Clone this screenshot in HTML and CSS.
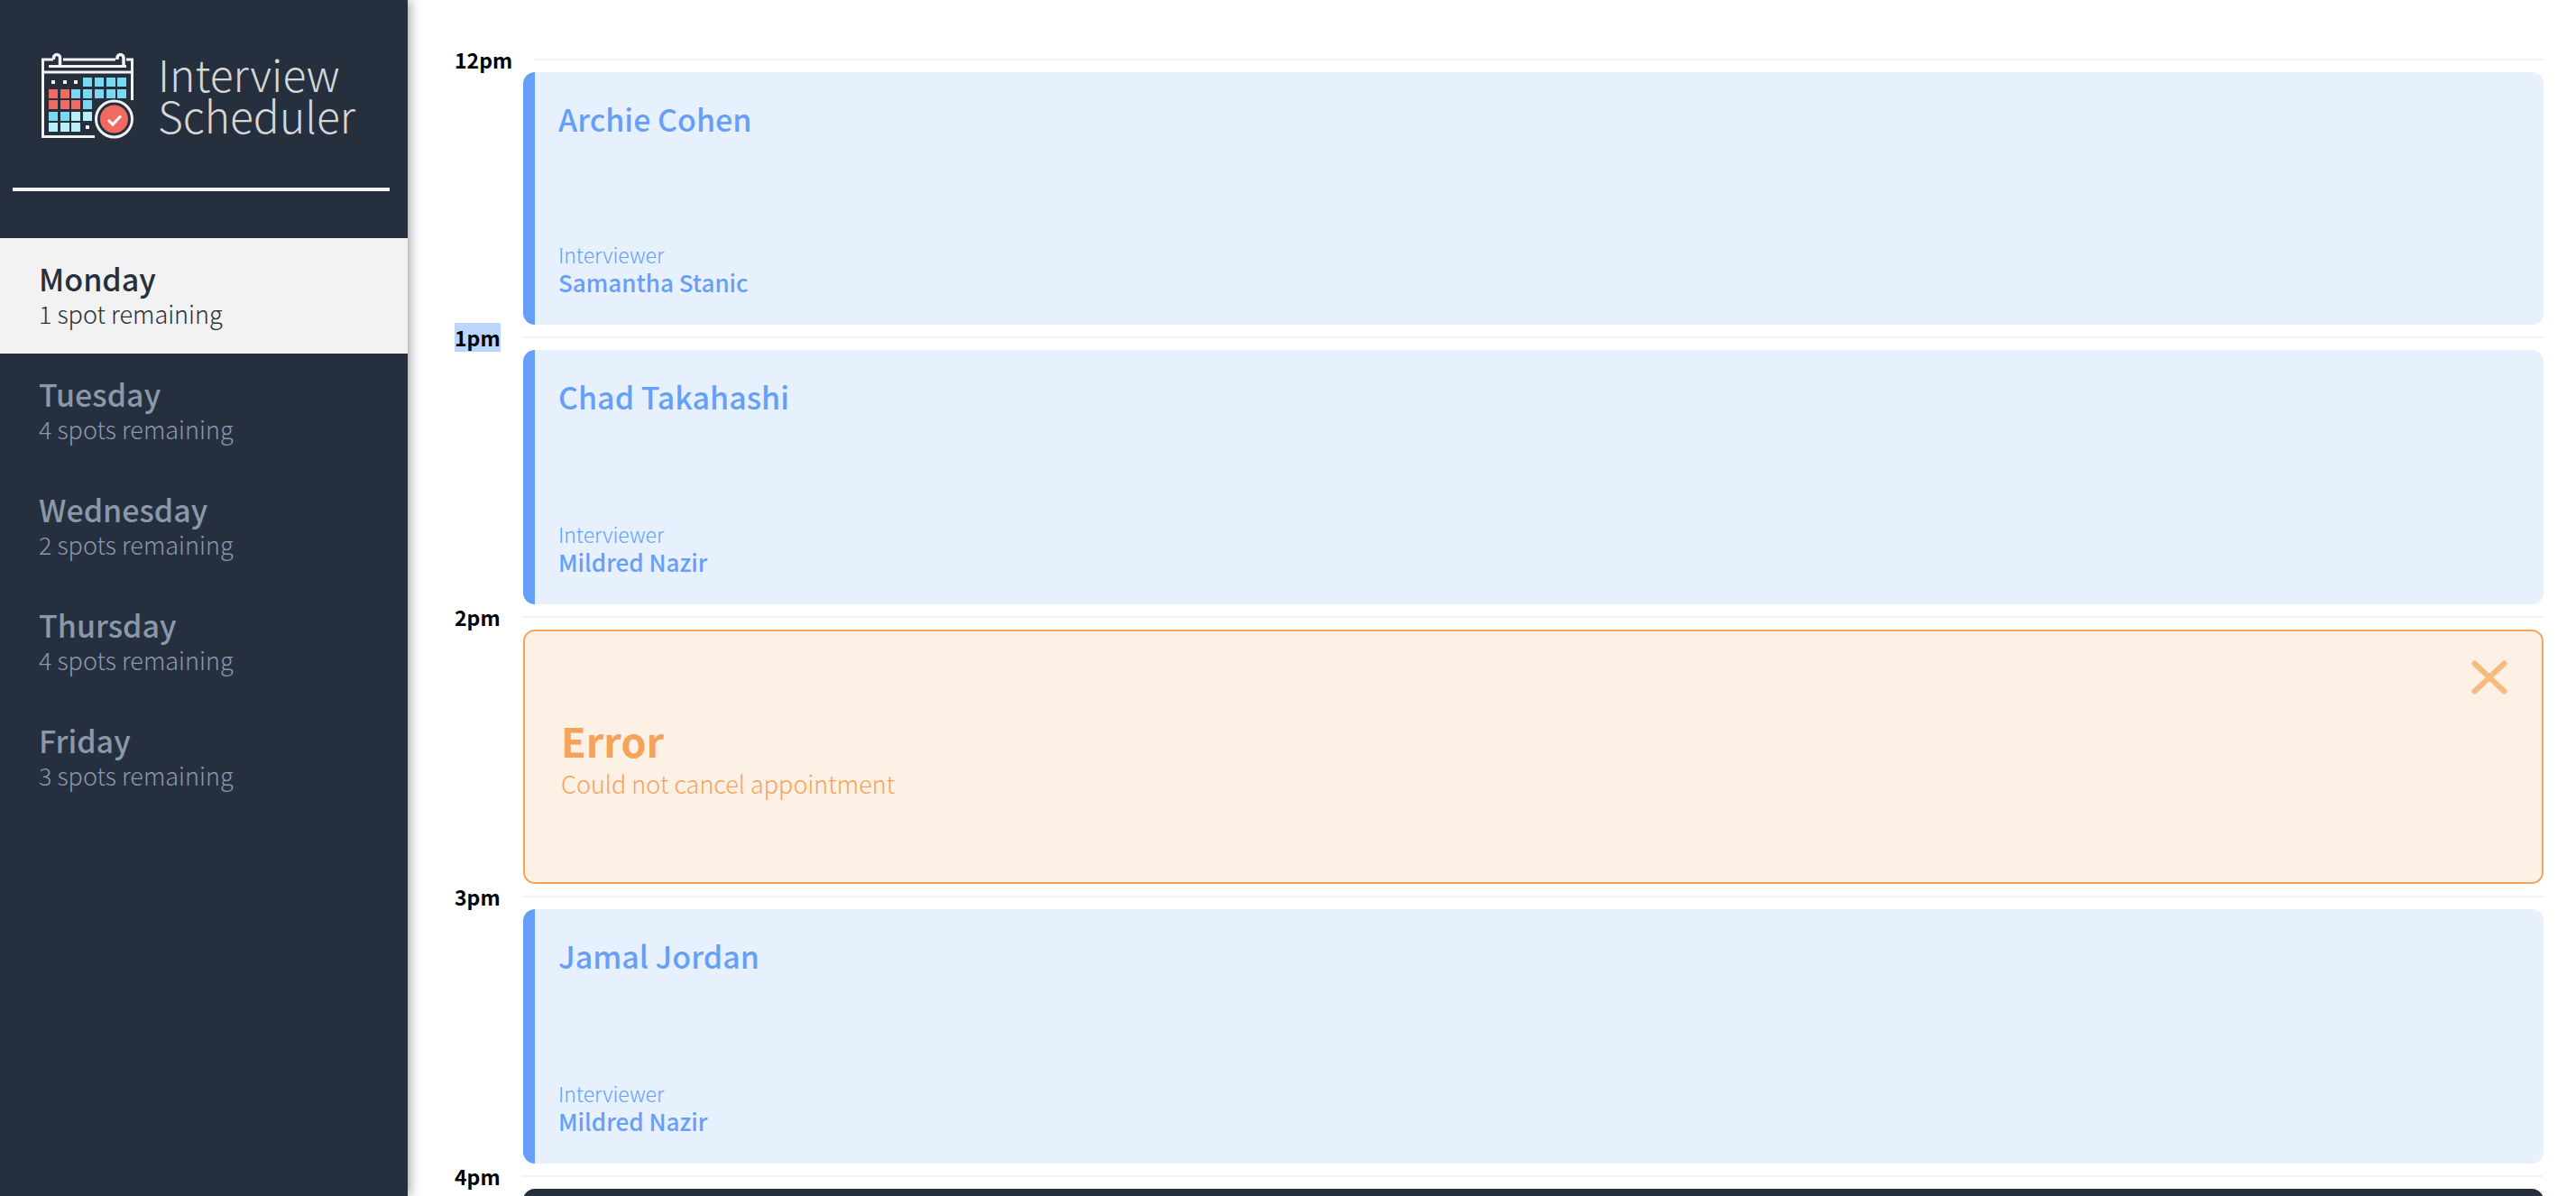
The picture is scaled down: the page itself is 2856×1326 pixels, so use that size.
FILE: index.html
```html
<!DOCTYPE html>
<html lang="en">
<head>
  <meta charset="utf-8">
  <meta name="viewport" content="width=device-width, initial-scale=1">
  <title>Interview Scheduler</title>
  <link rel="stylesheet" href="styles.css">
</head>
<body>
  <div class="layout">
    <aside class="sidebar">
      <div class="brand">
        <svg class="brand__icon" viewBox="0 0 104 96" aria-hidden="true">
          <g fill="none" stroke="#f2f2f2" stroke-width="3">
            <path d="M14 8H2.500V93.500H60M95 8h6.500V53"/>
            <path d="M25 8H83M2.500 22H101M9 15.500H95"/>
            <path stroke-width="3.500" d="M14.500 8V6a3.500 3.500 0 0 1 7 0v9M85 8V6a3.500 3.500 0 0 1 7 0v9"/>
          </g>
          <g fill="#f2f2f2"><path d="M12 31h4v4h-4zM25 31h4v4h-4zM37 31h4v4h-4zM50 81h4v4h-4z"/></g>
          <g fill="#7ad8f0"><path d="M47 28h10v10H47zM60 28h10v10H60zM73 28h10v10H73zM85 28h10v10H85zM34 41h10v10H34zM47 41h10v10H47zM60 41h10v10H60zM73 41h10v10H73zM85 41h10v10H85zM47 53h10v10H47zM9 66h10v10H9zM22 66h10v10H22z"/></g>
          <g fill="#f06a62"><path d="M9 41h10v10H9zM22 41h10v10H22zM9 53h10v10H9zM22 53h10v10H22zM34 53h10v10H34z"/></g>
          <g fill="#b9eff9"><path d="M34 66h10v10H34zM47 66h10v10H47zM9 78h10v10H9zM22 78h10v10H22zM34 78h10v10H34z"/></g>
          <circle cx="81.500" cy="74" r="20" fill="#262f3d" stroke="#f2f2f2" stroke-width="3"/>
          <circle cx="81.500" cy="74" r="15.500" fill="#f06a62"/>
          <path d="M75 75l5 5 9-9.500" fill="none" stroke="#fff" stroke-width="3"/>
        </svg>
        <div class="brand__name">Interview<br>Scheduler</div>
      </div>
      <hr class="sidebar__separator">
      <nav>
        <ul class="days">
          <li><a class="day day--selected" href="#monday"><span class="day__name">Monday</span><span class="day__spots">1 spot remaining</span></a></li>
          <li><a class="day" href="#tuesday"><span class="day__name">Tuesday</span><span class="day__spots">4 spots remaining</span></a></li>
          <li><a class="day" href="#wednesday"><span class="day__name">Wednesday</span><span class="day__spots">2 spots remaining</span></a></li>
          <li><a class="day" href="#thursday"><span class="day__name">Thursday</span><span class="day__spots">4 spots remaining</span></a></li>
          <li><a class="day" href="#friday"><span class="day__name">Friday</span><span class="day__spots">3 spots remaining</span></a></li>
        </ul>
      </nav>
    </aside>
    <main class="schedule">
      <article class="appointment">
        <header class="appointment__time"><h4>12pm</h4><hr></header>
        <section class="card card--show">
          <h2 class="card__student">Archie Cohen</h2>
          <div><h4 class="card__label">Interviewer</h4><h3 class="card__interviewer">Samantha Stanic</h3></div>
        </section>
      </article>
      <article class="appointment">
        <header class="appointment__time"><h4><mark>1pm</mark></h4><hr></header>
        <section class="card card--show">
          <h2 class="card__student">Chad Takahashi</h2>
          <div><h4 class="card__label">Interviewer</h4><h3 class="card__interviewer">Mildred Nazir</h3></div>
        </section>
      </article>
      <article class="appointment">
        <header class="appointment__time"><h4>2pm</h4><hr></header>
        <section class="card card--error">
          <div class="card__body">
            <h1 class="card__title">Error</h1>
            <p class="card__message">Could not cancel appointment</p>
          </div>
          <button class="card__close" type="button" aria-label="Close">
            <svg viewBox="0 0 40 38" aria-hidden="true"><path d="M3.500 3.500l33 31M36.500 3.500l-33 31" fill="none" stroke="currentColor" stroke-width="6" stroke-linecap="round"/></svg>
          </button>
        </section>
      </article>
      <article class="appointment">
        <header class="appointment__time"><h4>3pm</h4><hr></header>
        <section class="card card--show">
          <h2 class="card__student">Jamal Jordan</h2>
          <div><h4 class="card__label">Interviewer</h4><h3 class="card__interviewer">Mildred Nazir</h3></div>
        </section>
      </article>
      <article class="appointment">
        <header class="appointment__time"><h4>4pm</h4><hr></header>
        <section class="card card--dark"></section>
      </article>
    </main>
  </div>
</body>
</html>
```
FILE: styles.css
```css
* {
  box-sizing: border-box;
}

body,
h1,
h2,
h3,
h4,
p,
ul {
  margin: 0;
  padding: 0;
}

body {
  background: #fff;
  color: #000;
  font-family: "Noto Sans CJK SC", "Noto Sans", sans-serif;
}

.layout {
  display: flex;
  height: 100vh;
}

/* Sidebar */
.sidebar {
  position: relative;
  z-index: 1;
  flex: 0 0 452px;
  background: #262f3d;
  box-shadow: 2px 0 12px rgba(0, 0, 0, 0.4);
}

.brand {
  display: flex;
  gap: 26px;
  padding: 58px 0 0 45px;
}

.brand__icon {
  flex: none;
  width: 104px;
  height: 96px;
}

.brand__name {
  color: #d4d6d8;
  font-size: 48px;
  font-weight: 300;
  line-height: 46px;
}

.sidebar__separator {
  height: 4px;
  margin: 54px 20px 52px 14px;
  border: 0;
  background: #f2f2f2;
}

.days {
  list-style: none;
}

.day {
  display: flex;
  flex-direction: column;
  justify-content: center;
  height: 128px;
  padding: 2px 43px 0;
  color: #8a98ab;
  text-decoration: none;
}

.day--selected {
  background: #f2f2f2;
  color: #262f3d;
}

.day__name {
  font-size: 34px;
  font-weight: 500;
  line-height: 38px;
}

.day__spots {
  font-size: 27px;
  font-weight: 300;
  line-height: 40px;
}

/* Schedule */
.schedule {
  flex: 1;
  padding: 52px 36px 0 52px;
  overflow-y: auto;
  scrollbar-width: none;
}

.appointment__time {
  display: flex;
  align-items: center;
  gap: 24px;
  height: 28px;
}

.appointment__time h4 {
  font-size: 23px;
  font-weight: 700;
  line-height: 32px;
}

.appointment__time mark {
  display: block;
  background: #bad6fc;
  color: inherit;
}

.appointment__time hr {
  flex: 1;
  height: 2px;
  margin: 0;
  border: 0;
  background: #f2f2f2;
}

.card {
  display: flex;
  justify-content: space-between;
  min-height: 282px;
  margin-left: 76px;
  border-radius: 13px;
}

.appointment:first-child .card {
  min-height: 280px;
}

.card--show {
  flex-direction: column;
  padding: 26px 26px 31px;
  border-left: 13px solid #669ff8;
  background: #e7f0fd;
  color: #669ff8;
}

.card__student {
  font-size: 34px;
  font-weight: 500;
  line-height: 52px;
}

.card__label {
  font-size: 23px;
  font-weight: 300;
  line-height: 30px;
}

.card__interviewer {
  font-size: 26px;
  font-weight: 500;
  line-height: 32px;
}

.card--error {
  align-items: center;
  padding: 32px 38px 32px 40px;
  border: 2px solid #f5a358;
  background: #fdf0e4;
  color: #f5a358;
}

.card__body {
  padding-top: 7px;
}

.card__title {
  font-size: 45px;
  font-weight: 700;
  line-height: 52px;
}

.card__message {
  font-size: 27px;
  font-weight: 300;
  line-height: 44px;
}

.card__close {
  align-self: flex-start;
  width: 40px;
  height: 38px;
  padding: 0;
  border: 0;
  background: none;
  color: #f7ba80;
}

.card__close svg {
  display: block;
}

.card--dark {
  background: #262f3d;
}
```
